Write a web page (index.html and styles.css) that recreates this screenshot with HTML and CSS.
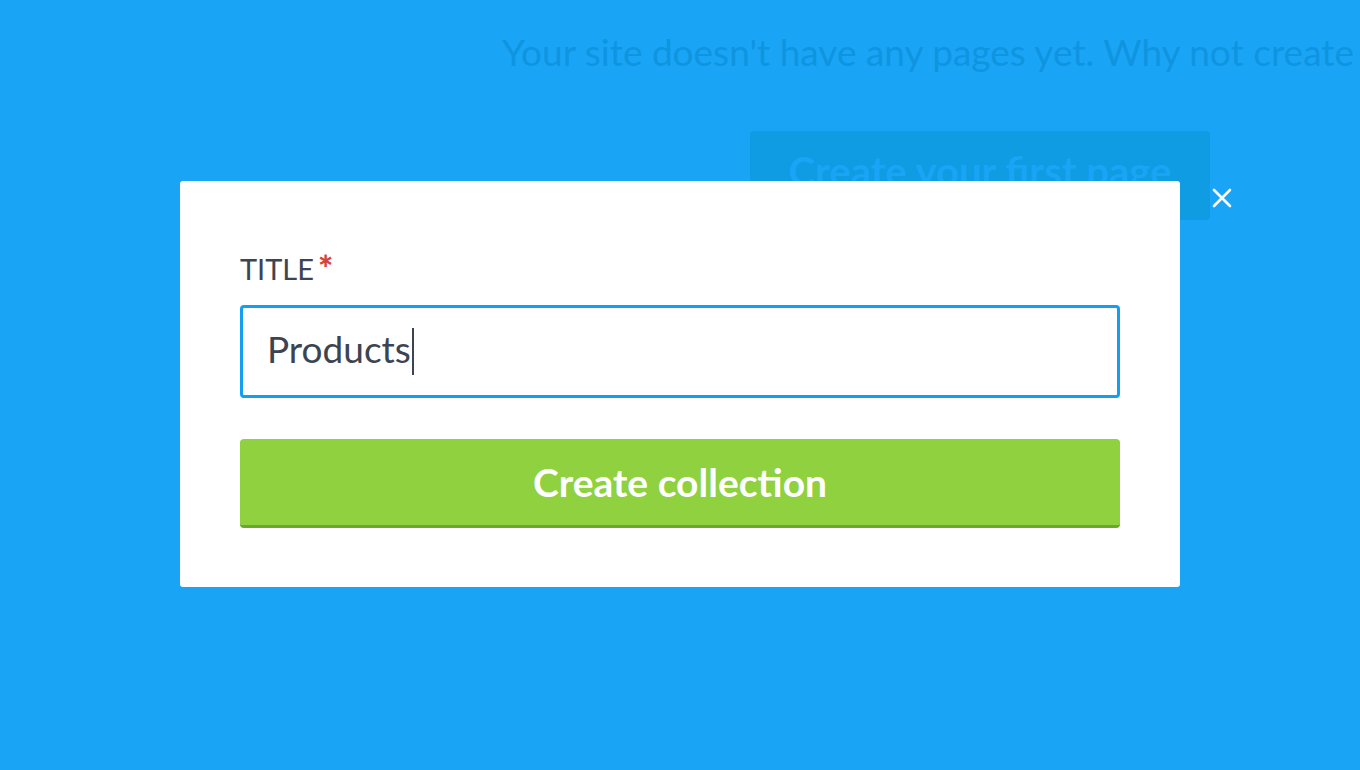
FILE: index.html
```html
<!DOCTYPE html>
<html>
<head>
<meta charset="utf-8">
<link rel="stylesheet" href="styles.css">
</head>
<body>
<div class="page">
  <p class="empty-text">Your site doesn't have any pages yet. Why not create one?</p>
  <div class="first-page-btn">Create your first page</div>
</div>
<div class="overlay">
  <div class="modal">
    <label class="field-label">TITLE<span class="req">*</span></label>
    <div class="input"><span class="value">Products</span><span class="caret"></span></div>
    <button class="submit">Create collection</button>
  </div>
  <div class="close">
    <svg width="20" height="20" viewBox="0 0 20 20"><path d="M2 2 L18 18 M18 2 L2 18" stroke="#fff" stroke-width="2.6" stroke-linecap="round"/></svg>
  </div>
</div>
</body>
</html>
```
FILE: styles.css
```css
* { box-sizing: border-box; }
html, body { margin: 0; padding: 0; }
body {
  width: 1360px;
  height: 770px;
  overflow: hidden;
  background: #1aa4f5;
  font-family: Lato, "Liberation Sans", sans-serif;
  position: relative;
}
.page {
  padding: 28px 0 0 502px;
  display: flex;
  flex-direction: column;
}
.empty-text {
  margin: 0;
  white-space: nowrap;
  font-size: 37px;
  line-height: 48px;
  color: #0f94e0;
}
.first-page-btn {
  margin: 55px 0 0 248px;
  width: 460px;
  height: 89px;
  background: #0f9ce2;
  border-radius: 4px;
  color: #1aa4f5;
  font-size: 40px;
  font-weight: 700;
  padding-top: 16px;
  text-align: center;
}
.overlay {
  position: absolute;
  left: 0; top: 0; right: 0; bottom: 0;
}
.modal {
  position: absolute;
  left: 180px;
  top: 181px;
  width: 1000px;
  height: 406px;
  background: #fff;
  border-radius: 3px;
  padding: 71px 60px 0;
  display: flex;
  flex-direction: column;
}
.field-label {
  font-size: 29px;
  line-height: 34px;
  color: #3d4451;
  display: flex;
  align-items: flex-start;
  gap: 4px;
}
.req { color: #d9423a; font-weight: 900; font-size: 36px; line-height: 36px; margin-top: -2px; }
.input {
  margin-top: 19px;
  height: 93px;
  border: 3px solid #139ef0;
  border-radius: 4px;
  display: flex;
  align-items: center;
  padding-left: 24px;
  padding-bottom: 6px;
  color: #3d4451;
  font-size: 37px;
}
.caret {
  display: inline-block;
  width: 2px;
  height: 47px;
  background: #3d4451;
  margin-left: 1px;
  margin-top: 6px;
}
.submit {
  margin-top: 41px;
  height: 89px;
  border: 0;
  border-bottom: 3px solid #68a82a;
  border-radius: 4px;
  background: #8fd13f;
  color: #fff;
  font-family: Lato, "Liberation Sans", sans-serif;
  font-size: 39px;
  font-weight: 700;
  padding: 0;
}
.close {
  position: absolute;
  left: 1212px;
  top: 188px;
  width: 20px;
  height: 20px;
  display: flex;
}
```
